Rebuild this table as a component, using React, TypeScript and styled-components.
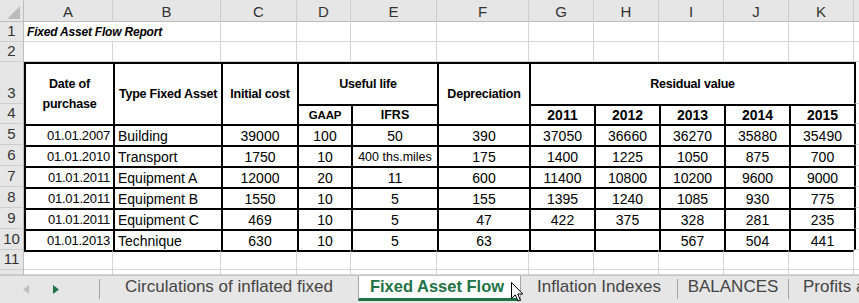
import React from 'react';
import styled, { createGlobalStyle, css } from 'styled-components';

const GlobalStyle = createGlobalStyle`
  html, body { margin: 0; padding: 0; background: #fff; overflow: hidden; }
  body { font-family: "Liberation Sans", Arial, sans-serif; }
`;

const FONT = `"Liberation Sans", Arial, sans-serif`;
const GRID = '#d4d4d4';
const HEAD_BG = '#e6e6e6';
const GREEN = '#217346';

const Page = styled.div`
  width: 859px;
  height: 303px;
  display: flex;
  flex-direction: column;
  position: relative;
  overflow: hidden;
  font-family: ${FONT};
`;

const Sheet = styled.div`
  display: grid;
  grid-template-columns: 24px 89px 108px 76px 54px 86px 92px 65px 65px 65px 65px 65px 1fr;
  grid-template-rows: 22px 20px 20px 42px 20px repeat(6, 21px) 20px 5px;
  flex: none;
`;

const Corner = styled.div`
  box-sizing: border-box;
  background: ${HEAD_BG};
  border-right: 1px solid #bdbdbd;
  border-bottom: 1px solid #bdbdbd;
  display: flex;
  align-items: flex-end;
  justify-content: flex-end;
  padding: 0 3px 2px 0;
`;

const ColHead = styled.div<{ $last?: boolean }>`
  box-sizing: border-box;
  background: ${HEAD_BG};
  border-right: ${p => (p.$last ? 'none' : '1px solid #cdcdcd')};
  border-bottom: 1px solid #bdbdbd;
  display: flex;
  align-items: center;
  justify-content: center;
  padding-top: 1px;
  font-size: 15px;
  color: #333;
`;

const RowHead = styled.div`
  box-sizing: border-box;
  background: ${HEAD_BG};
  border-right: 1px solid #bdbdbd;
  border-bottom: 1px solid #cdcdcd;
  display: flex;
  align-items: flex-end;
  justify-content: center;
  line-height: 20px;
  font-size: 15px;
  color: #333;
  overflow: hidden;
`;

type Align = 'left' | 'center' | 'right';

interface CellProps {
  $align?: Align;
  $box?: boolean;
  $edgeTop?: boolean;
  $edgeLeft?: boolean;
  $cspan?: number;
  $rspan?: number;
  $size?: number;
  $bold?: boolean;
  $italic?: boolean;
  $track?: number;
}

const Cell = styled.div<CellProps>`
  box-sizing: border-box;
  display: flex;
  align-items: center;
  justify-content: ${p =>
    p.$align === 'right' ? 'flex-end' : p.$align === 'center' ? 'center' : 'flex-start'};
  text-align: center;
  padding: 0 3px;
  font-size: ${p => p.$size ?? 14}px;
  font-weight: ${p => (p.$bold ? 700 : 400)};
  font-style: ${p => (p.$italic ? 'italic' : 'normal')};
  letter-spacing: ${p => p.$track ?? 0}px;
  line-height: 20px;
  color: #000;
  white-space: nowrap;
  overflow: visible;
  ${p => p.$cspan && css`grid-column: span ${p.$cspan};`}
  ${p => p.$rspan && css`grid-row: span ${p.$rspan};`}
  ${p =>
    p.$box
      ? css`
          border-left: 2px solid #000;
          border-top: 2px solid #000;
        `
      : css`
          border-right: 1px solid ${GRID};
          border-bottom: 1px solid ${GRID};
        `}
  ${p => p.$edgeTop && css`border-top: 2px solid #000;`}
  ${p => p.$edgeLeft && css`border-left: 2px solid #000;`}
`;

const HeadText = styled.span`
  white-space: normal;
  text-align: center;
`;

const TabBar = styled.div`
  height: 28px;
  box-sizing: border-box;
  background: ${HEAD_BG};
  border-top: 1px solid #c6c6c6;
  display: flex;
  align-items: flex-start;
  font-family: ${FONT};
  flex: none;
`;

const Nav = styled.div`
  flex: 0 0 99px;
  height: 26px;
  display: flex;
  align-items: center;
  gap: 24px;
  padding-left: 23px;
  box-sizing: border-box;
`;

const Separator = styled.div`
  width: 1px;
  height: 20px;
  margin-top: 3px;
  background: #a6a6a6;
  flex: none;
`;

const Tab = styled.div<{ $w?: number; $active?: boolean; $start?: boolean }>`
  box-sizing: border-box;
  flex: ${p => (p.$w ? `0 0 ${p.$w}px` : '1 1 0')};
  min-width: 0;
  display: flex;
  justify-content: ${p => (p.$start ? 'flex-start' : 'center')};
  padding-left: ${p => (p.$start ? '14px' : '0')};
  height: 25px;
  line-height: 21px;
  font-size: 17px;
  white-space: nowrap;
  overflow: hidden;
  color: #444;
  ${p =>
    p.$active &&
    css`
      background: #fff;
      border-left: 1px solid #a8a8a8;
      border-right: 1px solid #a8a8a8;
      border-bottom: 3px solid ${GREEN};
      color: ${GREEN};
      font-weight: 700;
      font-size: 16.5px;
      padding-right: 5px;
    `}
`;

const Pointer = styled.svg`
  position: absolute;
  left: 511px;
  top: 282px;
`;

const COL_LETTERS = ['A', 'B', 'C', 'D', 'E', 'F', 'G', 'H', 'I', 'J', 'K'];

const DATA: string[][] = [
  ['01.01.2007', 'Building', '39000', '100', '50', '390', '37050', '36660', '36270', '35880', '35490'],
  ['01.01.2010', 'Transport', '1750', '10', '400 ths.miles', '175', '1400', '1225', '1050', '875', '700'],
  ['01.01.2011', 'Equipment A', '12000', '20', '11', '600', '11400', '10800', '10200', '9600', '9000'],
  ['01.01.2011', 'Equipment B', '1550', '10', '5', '155', '1395', '1240', '1085', '930', '775'],
  ['01.01.2011', 'Equipment C', '469', '10', '5', '47', '422', '375', '328', '281', '235'],
  ['01.01.2013', 'Technique', '630', '10', '5', '63', '', '', '567', '504', '441'],
];

const YEARS = ['2011', '2012', '2013', '2014', '2015'];

const TABS = [
  { label: 'Circulations of inflated fixed', w: 258 },
  { label: 'Fixed Asset Flow', w: 163, active: true },
  { label: 'Inflation Indexes', w: 156, sepAfter: true },
  { label: 'BALANCES', w: 110, sepAfter: true },
  { label: 'Profits and losses', start: true },
];

const blankRow = (key: string, edgeTop = false) =>
  Array.from({ length: 12 }, (_, i) => (
    <Cell key={`${key}-${i}`} $edgeTop={edgeTop && i < 11} />
  ));

export default function App() {
  return (
    <Page>
      <GlobalStyle />
      <Sheet>
        <Corner>
          <svg width="13" height="13" viewBox="0 0 13 13">
            <polygon points="0,13 13,13 13,0" fill="#bcbcbc" />
          </svg>
        </Corner>
        {COL_LETTERS.map(l => (
          <ColHead key={l}>{l}</ColHead>
        ))}
        <ColHead $last />

        {/* Row 1 */}
        <RowHead>1</RowHead>
        <Cell $cspan={2} $bold $italic $size={12} $track={-0.2}>
          Fixed Asset Flow Report
        </Cell>
        {Array.from({ length: 10 }, (_, i) => (
          <Cell key={`r1-${i}`} />
        ))}

        {/* Row 2 */}
        <RowHead>2</RowHead>
        {blankRow('r2')}

        {/* Row 3 */}
        <RowHead>3</RowHead>
        <Cell $box $rspan={2} $align="center" $bold $size={12.5} $track={-0.2}>
          <HeadText>
            Date of
            <br />
            purchase
          </HeadText>
        </Cell>
        <Cell $box $rspan={2} $align="center" $bold $size={12.5} $track={-0.2}>
          Type Fixed Asset
        </Cell>
        <Cell $box $rspan={2} $align="center" $bold $size={12.5} $track={-0.2}>
          Initial cost
        </Cell>
        <Cell $box $cspan={2} $align="center" $bold $size={12.5} $track={-0.2}>
          Useful life
        </Cell>
        <Cell $box $rspan={2} $align="center" $bold $size={12.5} $track={-0.2}>
          Depreciation
        </Cell>
        <Cell $box $cspan={5} $align="center" $bold $size={12.5} $track={-0.2}>
          Residual value
        </Cell>
        <Cell $edgeLeft />

        {/* Row 4 */}
        <RowHead>4</RowHead>
        <Cell $box $align="center" $bold $size={11.5} $track={-0.2}>
          GAAP
        </Cell>
        <Cell $box $align="center" $bold $size={12.5}>
          IFRS
        </Cell>
        {YEARS.map(y => (
          <Cell key={y} $box $align="center" $bold $size={14}>
            {y}
          </Cell>
        ))}
        <Cell $edgeLeft />

        {/* Data rows 5-10 */}
        {DATA.map((row, r) => (
          <React.Fragment key={`d${r}`}>
            <RowHead>{r + 5}</RowHead>
            {row.map((v, c) => (
              <Cell
                key={c}
                $box
                $align={c === 0 ? 'right' : c === 1 ? 'left' : 'center'}
                $size={c === 0 ? 13 : c === 4 && v.length > 3 ? 12.5 : 14}
                $track={c === 0 ? -0.2 : 0}
              >
                {v}
              </Cell>
            ))}
            <Cell $edgeLeft />
          </React.Fragment>
        ))}

        {/* Row 11 */}
        <RowHead>11</RowHead>
        {blankRow('r11', true)}

        {/* Row 12 (partially visible) */}
        <RowHead />
        {blankRow('r12')}
      </Sheet>

      <TabBar>
        <Nav>
          <svg width="6" height="9" viewBox="0 0 6 9">
            <polygon points="6,0 6,9 0,4.5" fill="#bfbfbf" />
          </svg>
          <svg width="6" height="9" viewBox="0 0 6 9">
            <polygon points="0,0 0,9 6,4.5" fill={GREEN} />
          </svg>
        </Nav>
        <Separator />
        {TABS.map(t => (
          <React.Fragment key={t.label}>
            <Tab $w={t.w} $active={t.active} $start={t.start}>
              {t.label}
            </Tab>
            {t.sepAfter && <Separator />}
          </React.Fragment>
        ))}
      </TabBar>

      <Pointer width="13" height="21" viewBox="0 0 13 21">
        <path
          d="M0.5 0.5 L0.5 16.5 L4.3 12.9 L6.9 19 L9.3 18 L6.8 12 L11.8 12 Z"
          fill="#fff"
          stroke="#000"
          strokeWidth="1"
          strokeLinejoin="miter"
        />
      </Pointer>
    </Page>
  );
}
